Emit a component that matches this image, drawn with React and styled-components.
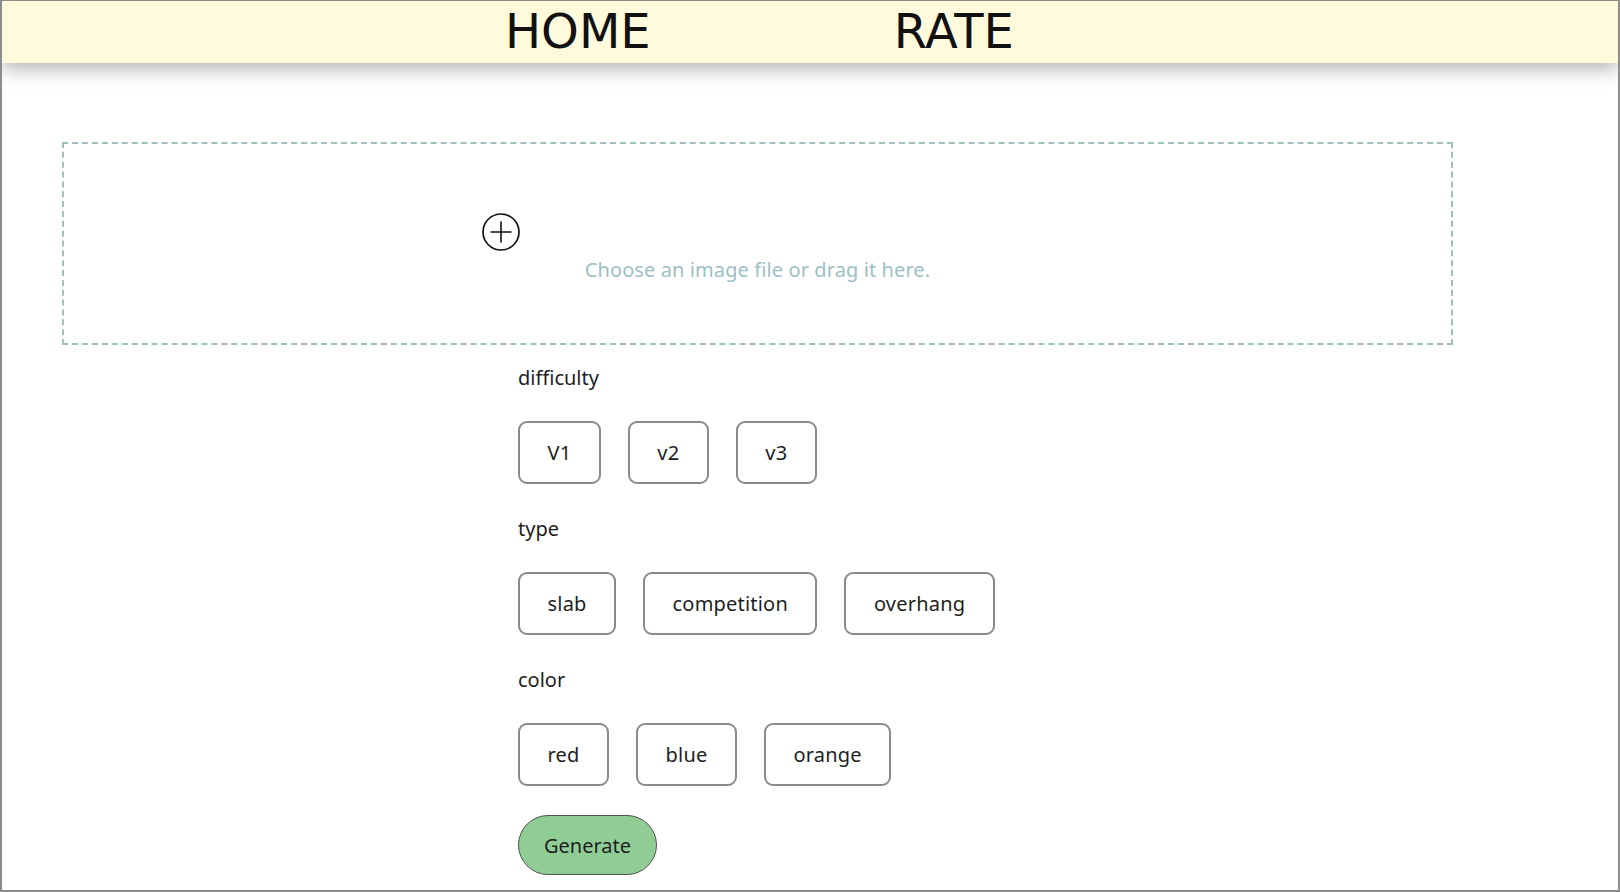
import React from "react";
import styled, { createGlobalStyle } from "styled-components";

const GlobalStyle = createGlobalStyle`
  html, body {
    margin: 0;
    padding: 0;
    background: #ffffff;
  }
  body {
    font-family: "Noto Sans", "Open Sans", sans-serif;
    color: #1e1e1e;
  }
  * { box-sizing: border-box; }
`;

const Frame = styled.div`
  height: 100vh;
  border: 2px solid #8c8c8c;
  border-top-width: 1px;
  overflow: hidden;
  background: #ffffff;
`;

const Header = styled.header`
  height: 62px;
  background: #fffadc;
  box-shadow: 0 6px 18px rgba(0, 0, 0, 0.3);
  display: flex;
  align-items: flex-start;
  padding: 2px 0 0 503px;
  gap: 243px;
  position: relative;
  z-index: 1;
`;

const NavLink = styled.a`
  font-family: "DejaVu Sans", sans-serif;
  font-size: 48px;
  line-height: 56px;
  color: #111111;
  text-decoration: none;
  cursor: pointer;
`;

const Main = styled.main`
  padding-top: 79px;
`;

const DropZone = styled.label`
  display: flex;
  flex-direction: column;
  align-items: center;
  margin-left: 60px;
  width: 1391px;
  height: 203px;
  border: 2px dashed #9fbfc1;
  padding-top: 68px;
  cursor: pointer;
`;

const IconRow = styled.div`
  align-self: stretch;
  padding-left: 417px;
  height: 40px;
  margin-bottom: 4px;
`;

const DropText = styled.span`
  font-size: 20px;
  line-height: 27px;
  color: #9dbfc4;
  letter-spacing: 0.1px;
`;

const Form = styled.div`
  margin-left: 516px;
  margin-top: 19px;
  display: flex;
  flex-direction: column;
  align-items: flex-start;
`;

const Group = styled.div`
  display: flex;
  flex-direction: column;
  align-items: flex-start;
  margin-bottom: ${(p) => (p.$last ? "29px" : "31px")};
`;

const Label = styled.div`
  font-size: 20px;
  line-height: 27px;
  color: #1e1e1e;
  margin-bottom: 30px;
`;

const Options = styled.div`
  display: flex;
  gap: 27px;
`;

const Option = styled.button`
  height: 63px;
  padding: 0 27.5px;
  border: 2px solid #8a8a8a;
  border-radius: 9px;
  background: #ffffff;
  font-family: "Noto Sans", "Open Sans", sans-serif;
  font-size: 20px;
  letter-spacing: 0.2px;
  color: #1e1e1e;
  cursor: pointer;
`;

const Generate = styled.button`
  height: 60px;
  padding: 0 25px;
  border: 1px solid #505050;
  border-radius: 30px;
  background: #8fcd95;
  font-family: "Noto Sans", "Open Sans", sans-serif;
  font-size: 20px;
  color: #1e1e1e;
  cursor: pointer;
`;

const PlusIcon = () => (
  <svg width="40" height="40" viewBox="0 0 40 40" fill="none">
    <circle cx="20" cy="20" r="18" stroke="#111" strokeWidth="1.7" />
    <path d="M20 9.5V30.5M9.5 20H30.5" stroke="#111" strokeWidth="1.6" />
  </svg>
);

const groups = [
  { label: "difficulty", options: ["V1", "v2", "v3"] },
  { label: "type", options: ["slab", "competition", "overhang"] },
  { label: "color", options: ["red", "blue", "orange"] },
];

export default function App() {
  return (
    <>
      <GlobalStyle />
      <Frame>
        <Header>
          <NavLink>HOME</NavLink>
          <NavLink>RATE</NavLink>
        </Header>
        <Main>
          <DropZone>
            <IconRow>
              <PlusIcon />
            </IconRow>
            <DropText>Choose an image file or drag it here.</DropText>
          </DropZone>
          <Form>
            {groups.map((g, i) => (
              <Group key={g.label} $last={i === groups.length - 1}>
                <Label>{g.label}</Label>
                <Options>
                  {g.options.map((o) => (
                    <Option key={o}>{o}</Option>
                  ))}
                </Options>
              </Group>
            ))}
            <Generate>Generate</Generate>
          </Form>
        </Main>
      </Frame>
    </>
  );
}
